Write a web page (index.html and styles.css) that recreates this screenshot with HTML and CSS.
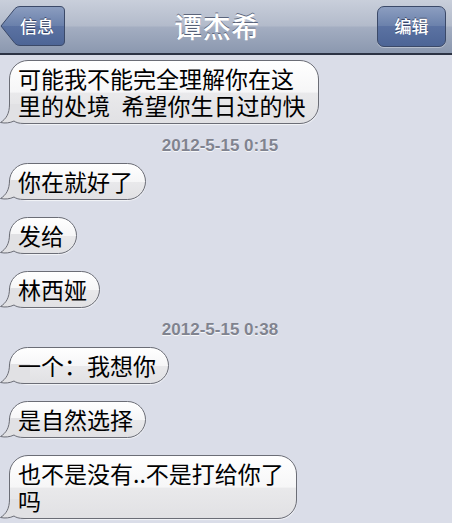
FILE: index.html
```html
<!DOCTYPE html>
<html lang="zh">
<head>
<meta charset="utf-8">
<link rel="stylesheet" href="styles.css">
</head>
<body>
<div class="screen">
  <header class="navbar">
    <div class="back">
      <svg class="back-bg" width="66" height="42" viewBox="0 0 66 42">
        <defs>
          <linearGradient id="bg-back" x1="0" y1="0" x2="0" y2="1">
            <stop offset="0" stop-color="#8c9ec0"/>
            <stop offset="0.5" stop-color="#6a80ab"/>
            <stop offset="0.5" stop-color="#5b72a2"/>
            <stop offset="1" stop-color="#4d6596"/>
          </linearGradient>
        </defs>
        <path d="M1,21 L15,3.5 Q17,1.5 20,1.5 L60,1.5 Q64.5,1.5 64.5,6 L64.5,36 Q64.5,40.5 60,40.5 L20,40.5 Q17,40.5 15,38.5 Z" fill="url(#bg-back)" stroke="#3b4968" stroke-width="1"/>
      </svg>
      <span class="btn-label">信息</span>
    </div>
    <h1 class="title">谭杰希</h1>
    <div class="edit"><span class="btn-label">编辑</span></div>
  </header>

  <main class="thread">
    <div class="bubble"><span class="txt">可能我不能完全理解你在这<br>里的处境&ensp;希望你生日过的快</span><svg class="tail" width="30" height="20" viewBox="0 0 30 20"><path class="tail-fill" d="M9.5,0 C9.5,10 6,15 0.5,18.5 C5,19.5 10,19 14,17 C16,18.5 19,19.5 24,19.5 L30,19.5 L30,0 Z"/><path class="tail-line" d="M9.5,0 C9.5,10 6,15 0.5,18.5 C5,19.5 10,19 14,17 C16,18.5 19,19.5 24,19.5 L30,19.5"/></svg></div>

    <div class="stamp">2012-5-15 0:15</div>

    <div class="bubble"><span class="txt">你在就好了</span><svg class="tail" width="30" height="20" viewBox="0 0 30 20"><path class="tail-fill" d="M9.5,0 C9.5,10 6,15 0.5,18.5 C5,19.5 10,19 14,17 C16,18.5 19,19.5 24,19.5 L30,19.5 L30,0 Z"/><path class="tail-line" d="M9.5,0 C9.5,10 6,15 0.5,18.5 C5,19.5 10,19 14,17 C16,18.5 19,19.5 24,19.5 L30,19.5"/></svg></div>

    <div class="bubble gap"><span class="txt">发给</span><svg class="tail" width="30" height="20" viewBox="0 0 30 20"><path class="tail-fill" d="M9.5,0 C9.5,10 6,15 0.5,18.5 C5,19.5 10,19 14,17 C16,18.5 19,19.5 24,19.5 L30,19.5 L30,0 Z"/><path class="tail-line" d="M9.5,0 C9.5,10 6,15 0.5,18.5 C5,19.5 10,19 14,17 C16,18.5 19,19.5 24,19.5 L30,19.5"/></svg></div>

    <div class="bubble gap"><span class="txt">林西娅</span><svg class="tail" width="30" height="20" viewBox="0 0 30 20"><path class="tail-fill" d="M9.5,0 C9.5,10 6,15 0.5,18.5 C5,19.5 10,19 14,17 C16,18.5 19,19.5 24,19.5 L30,19.5 L30,0 Z"/><path class="tail-line" d="M9.5,0 C9.5,10 6,15 0.5,18.5 C5,19.5 10,19 14,17 C16,18.5 19,19.5 24,19.5 L30,19.5"/></svg></div>

    <div class="stamp">2012-5-15 0:38</div>

    <div class="bubble"><span class="txt">一个：我想你</span><svg class="tail" width="30" height="20" viewBox="0 0 30 20"><path class="tail-fill" d="M9.5,0 C9.5,10 6,15 0.5,18.5 C5,19.5 10,19 14,17 C16,18.5 19,19.5 24,19.5 L30,19.5 L30,0 Z"/><path class="tail-line" d="M9.5,0 C9.5,10 6,15 0.5,18.5 C5,19.5 10,19 14,17 C16,18.5 19,19.5 24,19.5 L30,19.5"/></svg></div>

    <div class="bubble gap"><span class="txt">是自然选择</span><svg class="tail" width="30" height="20" viewBox="0 0 30 20"><path class="tail-fill" d="M9.5,0 C9.5,10 6,15 0.5,18.5 C5,19.5 10,19 14,17 C16,18.5 19,19.5 24,19.5 L30,19.5 L30,0 Z"/><path class="tail-line" d="M9.5,0 C9.5,10 6,15 0.5,18.5 C5,19.5 10,19 14,17 C16,18.5 19,19.5 24,19.5 L30,19.5"/></svg></div>

    <div class="bubble gap"><span class="txt">也不是没有..不是打给你了<br>吗</span><svg class="tail" width="30" height="20" viewBox="0 0 30 20"><path class="tail-fill" d="M9.5,0 C9.5,10 6,15 0.5,18.5 C5,19.5 10,19 14,17 C16,18.5 19,19.5 24,19.5 L30,19.5 L30,0 Z"/><path class="tail-line" d="M9.5,0 C9.5,10 6,15 0.5,18.5 C5,19.5 10,19 14,17 C16,18.5 19,19.5 24,19.5 L30,19.5"/></svg></div>
  </main>
</div>
</body>
</html>
```

FILE: styles.css
```css
html, body {
  margin: 0;
  padding: 0;
  height: 100%;
  overflow: hidden;
  background: #dadde8;
}

.screen {
  width: 452px;
  height: 523px;
  overflow: hidden;
  background: #dadde8;
  font-family: "Noto Sans CJK SC", "Noto Sans", sans-serif;
}

/* ---------- nav bar ---------- */
.navbar {
  height: 55px;
  box-sizing: border-box;
  display: grid;
  grid-template-columns: 1fr auto 1fr;
  align-items: center;
  padding: 0 6px 1px 0;
  background: linear-gradient(#c9cfdb 0%, #b3bbcb 48%, #a3adc1 52%, #8b98af 100%);
  border-bottom: 2px solid #2c3344;
}

.back {
  position: relative;
  width: 66px;
  height: 42px;
  justify-self: start;
  display: flex;
  align-items: center;
  justify-content: center;
  padding-left: 8px;
  box-sizing: border-box;
}

.back-bg {
  position: absolute;
  left: 0;
  top: 0;
}

.btn-label {
  position: relative;
  color: #fff;
  font-size: 17px;
  line-height: 20px;
  font-weight: 500;
  text-shadow: 0 -1px 0 rgba(30, 40, 70, 0.7);
}

.title {
  margin: 0;
  padding-right: 12px;
  color: #fff;
  font-size: 28px;
  line-height: 32px;
  font-weight: 500;
  letter-spacing: 0.5px;
  text-shadow: 0 -1px 0 rgba(60, 70, 95, 0.75);
}

.edit {
  justify-self: end;
  width: 69px;
  height: 41px;
  box-sizing: border-box;
  display: flex;
  align-items: center;
  justify-content: center;
  border: 1px solid #3b4968;
  border-radius: 7px;
  background: linear-gradient(#8c9ec0 0%, #6a80ab 50%, #5b72a2 50%, #4d6596 100%);
  box-shadow: 0 1px 0 rgba(255, 255, 255, 0.35);
}

/* ---------- thread ---------- */
.thread {
  display: flex;
  flex-direction: column;
  align-items: flex-start;
  padding: 5px 0 0 9px;
}

.bubble {
  position: relative;
  border: 1px solid #6b6d76;
  border-radius: 19px;
  padding: 4px 12px 4px 8px;
  background: linear-gradient(#ffffff 0%, #f6f6f7 50%, #e9e9eb 52%, #e1e1e4 100%);
  box-shadow: 0 1px 1px rgba(255, 255, 255, 0.7);
  font-size: 23px;
  line-height: 27px;
  color: #000;
  white-space: nowrap;
}

.bubble.gap {
  margin-top: 17px;
}

.txt {
  position: relative;
  z-index: 1;
}

.tail {
  position: absolute;
  left: -10px;
  bottom: -1px;
  z-index: 0;
}

.tail-fill {
  fill: #e1e1e4;
}

.tail-line {
  fill: none;
  stroke: #6b6d76;
  stroke-width: 1;
}

.stamp {
  align-self: stretch;
  margin: 13px 0 8px;
  padding-right: 21px;
  text-align: center;
  font-family: "Liberation Sans", Arial, sans-serif;
  font-weight: bold;
  font-size: 17px;
  line-height: 18px;
  color: #80838f;
  text-shadow: 0 1px 0 rgba(255, 255, 255, 0.8);
}
```
